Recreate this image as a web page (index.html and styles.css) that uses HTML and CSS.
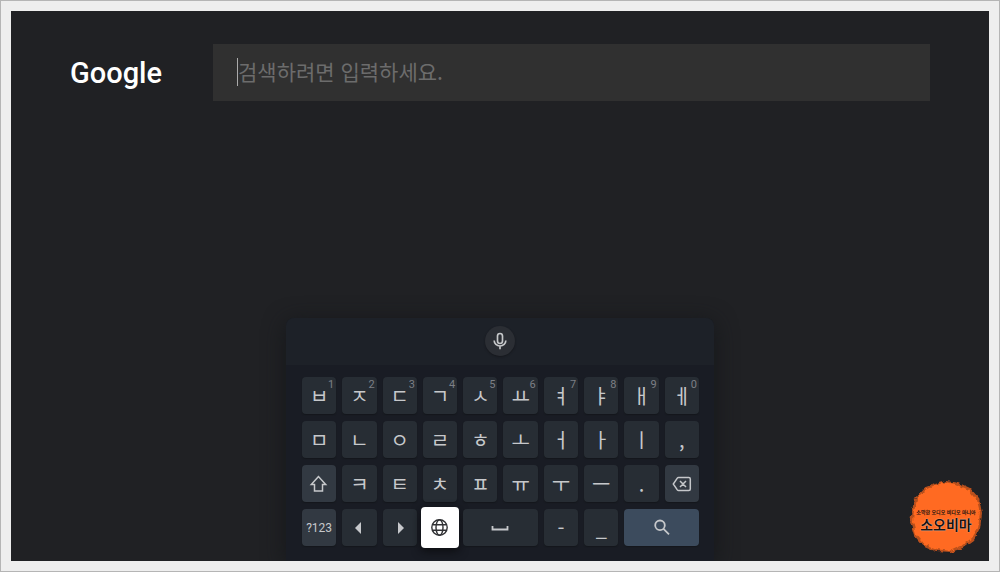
FILE: index.html
```html
<!DOCTYPE html>
<html lang="ko">
<head>
<meta charset="utf-8">
<title>Google</title>
<link rel="stylesheet" href="styles.css">
</head>
<body>
<main class="screen">
  <header class="search">
    <div class="logo">Google</div>
    <label class="field">
      <span class="caret"></span>
      <input class="query" type="text" placeholder="검색하려면 입력하세요." aria-label="검색">
    </label>
  </header>

  <section class="keyboard" aria-label="키보드">
    <div class="toolbar">
      <button class="mic" aria-label="음성 검색">
        <svg width="20" height="20" viewBox="0 0 24 24" fill="none" stroke="currentColor" stroke-width="2"><rect x="9" y="3" width="6" height="12" rx="3"/><path d="M5 11.500a7 6.500 0 0 0 14 0M12 18v4"/></svg>
      </button>
    </div>
    <div class="keys">
      <button class="key">ㅂ<span class="hint">1</span></button>
      <button class="key">ㅈ<span class="hint">2</span></button>
      <button class="key">ㄷ<span class="hint">3</span></button>
      <button class="key">ㄱ<span class="hint">4</span></button>
      <button class="key">ㅅ<span class="hint">5</span></button>
      <button class="key">ㅛ<span class="hint">6</span></button>
      <button class="key">ㅕ<span class="hint">7</span></button>
      <button class="key">ㅑ<span class="hint">8</span></button>
      <button class="key">ㅐ<span class="hint">9</span></button>
      <button class="key">ㅔ<span class="hint">0</span></button>

      <button class="key">ㅁ</button>
      <button class="key">ㄴ</button>
      <button class="key">ㅇ</button>
      <button class="key">ㄹ</button>
      <button class="key">ㅎ</button>
      <button class="key">ㅗ</button>
      <button class="key">ㅓ</button>
      <button class="key">ㅏ</button>
      <button class="key">ㅣ</button>
      <button class="key">,</button>

      <button class="key special" aria-label="Shift">
        <svg width="20" height="20" viewBox="0 0 20 20" fill="none" stroke="currentColor" stroke-width="1.500"><path d="M9.500 2.500 2.300 10.500H5.500V17h8v-6.500h3.200z"/></svg>
      </button>
      <button class="key">ㅋ</button>
      <button class="key">ㅌ</button>
      <button class="key">ㅊ</button>
      <button class="key">ㅍ</button>
      <button class="key">ㅠ</button>
      <button class="key">ㅜ</button>
      <button class="key">ㅡ</button>
      <button class="key">.</button>
      <button class="key special" aria-label="지우기">
        <svg width="20" height="20" viewBox="0 0 20 20" fill="none" stroke="currentColor" stroke-width="1.500"><path d="M6.500 3.500h10.300a1.500 1.500 0 0 1 1.500 1.500v10a1.500 1.500 0 0 1-1.500 1.500H6.500a1.500 1.500 0 0 1-1.200-.6L1.300 10l4-5.900a1.500 1.500 0 0 1 1.200-.6zM8 7l6 6M14 7l-6 6"/></svg>
      </button>

      <button class="key special label">?123</button>
      <button class="key" aria-label="왼쪽">
        <svg width="20" height="20" viewBox="0 0 20 20" fill="currentColor"><path d="M12 4v12L6 10z"/></svg>
      </button>
      <button class="key" aria-label="오른쪽">
        <svg width="20" height="20" viewBox="0 0 20 20" fill="currentColor"><path d="M8 4v12L14 10z"/></svg>
      </button>
      <button class="key active" aria-label="언어">
        <svg width="20" height="20" viewBox="0 0 20 20" fill="none" stroke="currentColor" stroke-width="1.400"><circle cx="9.500" cy="9.500" r="7.700"/><ellipse cx="9.500" cy="9.500" rx="3.500" ry="7.700"/><path d="M2.500 6.800h14M2.500 12.200h14"/></svg>
      </button>
      <button class="key wide" aria-label="스페이스">
        <svg width="20" height="20" viewBox="0 0 20 20" fill="none" stroke="currentColor" stroke-width="1.800"><path d="M2.500 8v3.500h15V8"/></svg>
      </button>
      <button class="key">-</button>
      <button class="key">_</button>
      <button class="key wide go" aria-label="검색">
        <svg width="20" height="20" viewBox="0 0 20 20" fill="none" stroke="currentColor" stroke-width="1.800"><circle cx="8" cy="7.300" r="4.800"/><path d="m11.500 10.800 5.500 5.500"/></svg>
      </button>
    </div>
  </section>

  <div class="badge">
    <svg class="paint" viewBox="0 0 76 76">
      <filter id="rough" x="-10%" y="-10%" width="120%" height="120%">
        <feTurbulence type="fractalNoise" baseFrequency="0.180" numOctaves="2" seed="4"/>
        <feDisplacementMap in="SourceGraphic" scale="5" xChannelSelector="R" yChannelSelector="G"/>
      </filter>
      <g filter="url(#rough)">
        <path fill="#b9501f" d="M38 2 51 4 62 9 71 19 74 34 72 50 66 61 55 69 43 73 28 72 14 66 6 56 2 43 4 31 7 19 16 9 27 5z"/>
        <path fill="#ff6a20" d="M38 3 50 6 61 11 69 21 72 34 70 49 64 59 53 67 42 72 29 70 16 65 8 55 5 43 6 31 9 20 18 11 28 6z"/>
      </g>
    </svg>
    <span class="tagline">소박한 오디오 비디오 마니아</span>
    <strong class="name">소오비마</strong>
  </div>
</main>
</body>
</html>
```

FILE: styles.css
```css
* { box-sizing: border-box; }

body {
  margin: 0;
  min-height: 100vh;
  display: flex;
  padding: 10px;
  border: 1px solid #b5b5b5;
  background: #eee;
  font-family: Roboto, "Noto Sans CJK KR", sans-serif;
}

.screen {
  position: relative;
  flex: 1;
  display: flex;
  flex-direction: column;
  justify-content: space-between;
  overflow: hidden;
  background: #202124;
}

.search {
  display: flex;
  align-items: center;
  gap: 50px;
  padding: 33px 59px 0;
}

.logo {
  width: 93px;
  color: #fff;
  font: 500 29px/40px Roboto, sans-serif;
}

.field {
  flex: 1;
  display: flex;
  align-items: center;
  height: 57px;
  padding: 0 24px 2px;
  background: #303030;
}

.caret {
  width: 1px;
  height: 28px;
  background: #aaa;
}

.query {
  flex: 1;
  min-width: 0;
  padding: 0 0 2px;
  border: 0;
  outline: 0;
  background: none;
  color: #ddd;
  font: 400 21px/32px "Noto Sans CJK KR", sans-serif;
}

.query::placeholder { color: #6c6c6c; opacity: 1; }

.keyboard {
  align-self: center;
  width: 428px;
  border-radius: 8px 8px 0 0;
  background: #191c24;
  box-shadow: 0 4px 22px #15171a;
}

.toolbar {
  display: flex;
  justify-content: center;
  align-items: center;
  height: 47px;
  padding-bottom: 2px;
  border-radius: 8px 8px 0 0;
  background: #1d2128;
}

.mic {
  display: grid;
  place-items: center;
  width: 30px;
  height: 30px;
  padding: 0;
  border: 0;
  border-radius: 50%;
  background: #2b2e34;
  color: #c6c8ca;
  box-shadow: 0 1px 2px #15171c;
}

.keys {
  display: grid;
  grid-template-columns: repeat(10, 1fr);
  grid-auto-rows: 37px;
  gap: 7px 6px;
  padding: 12px 15px 15px 16px;
}

.key {
  position: relative;
  display: grid;
  place-items: center;
  min-width: 0;
  padding: 0;
  border: 0;
  border-radius: 4px;
  background: #272d34;
  color: #c6c8cb;
  font: 400 20px/34px "Noto Sans CJK KR", sans-serif;
  box-shadow: 0 1px 1px #14171c;
}

.hint {
  position: absolute;
  top: 2px;
  right: 2px;
  color: #7c7f85;
  font: 400 11px/12px Roboto, sans-serif;
}

.special { background: #323942; }

.label { font: 400 12px/36px Roboto, sans-serif; }

.wide { grid-column: span 2; }

.go { background: #3c4b5d; }

.active {
  margin: -2px;
  background: #fff;
  color: #303134;
  box-shadow: 0 3px 10px #0c0d10;
}

.badge {
  position: absolute;
  right: 5px;
  bottom: 6px;
  display: flex;
  flex-direction: column;
  align-items: center;
  justify-content: center;
  gap: 1px;
  width: 76px;
  height: 76px;
  padding-top: 6px;
  color: #1b1310;
  font-family: "Noto Sans CJK KR", sans-serif;
  white-space: nowrap;
}

.paint {
  position: absolute;
  inset: 0;
}

.tagline {
  position: relative;
  font-size: 5px;
  font-weight: 700;
  line-height: 6px;
}

.name {
  position: relative;
  font-size: 14px;
  font-weight: 700;
  line-height: 16px;
  text-shadow: 0 0 1px #fff;
}
```
